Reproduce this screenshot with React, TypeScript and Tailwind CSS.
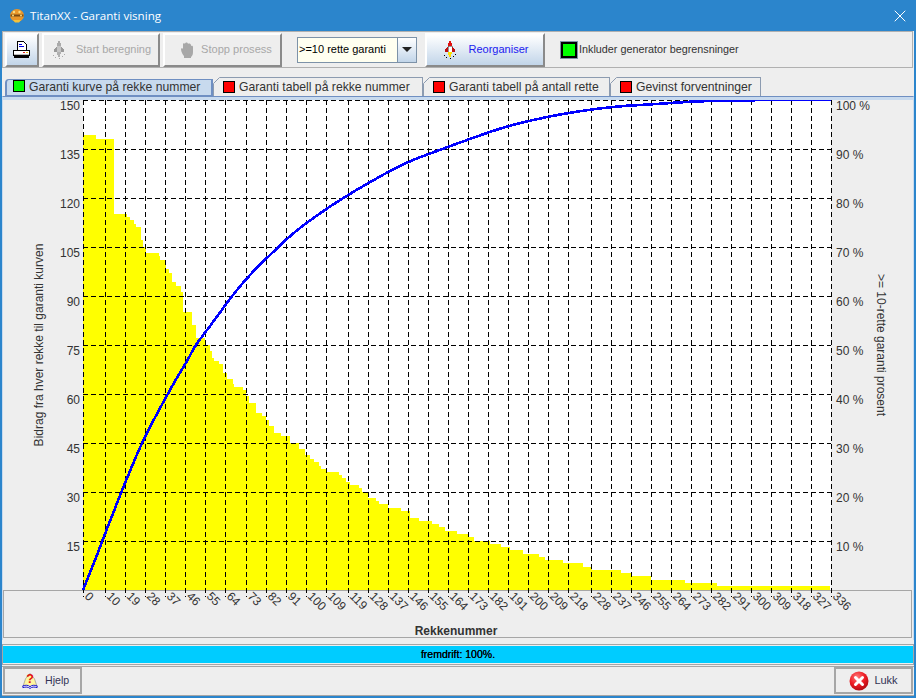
import { X } from "lucide-react";

const X_TICKS = [0, 10, 19, 28, 37, 46, 55, 64, 73, 82, 91, 100, 109, 119, 128, 137, 146, 155, 164, 173, 182, 191, 200, 209, 218, 228, 237, 246, 255, 264, 273, 282, 291, 300, 309, 318, 327, 336];
const LEFT_TICKS = [150, 135, 120, 105, 90, 75, 60, 45, 30, 15];
const RIGHT_TICKS = [100, 90, 80, 70, 60, 50, 40, 30, 20, 10];

// [x, top of bar] read off the reference
const BARS: [number, number][] = [
  [83, 135], [96, 139], [114, 214], [127, 217], [130, 220], [134, 224], [136, 227], [141, 240], [143, 247], [146, 253], [159, 256], [160, 260], [166, 269], [169, 273], [172, 282], [176, 286], [181, 292],
  [183, 312], [192, 325], [196, 338], [205, 345], [210, 351], [212, 358], [214, 361], [219, 364], [223, 373], [227, 379], [233, 384], [234, 387], [243, 390], [246, 396], [249, 403], [256, 413], [262, 416], [266, 420], [269, 426], [274, 433], [281, 436], [290, 443], [299, 449], [305, 455], [310, 459], [314, 462], [319, 466], [321, 469], [326, 472], [339, 475], [342, 478], [346, 482], [350, 485], [359, 488], [362, 492], [368, 498], [376, 501], [379, 504], [388, 508], [401, 511],
  [410, 518], [419, 521], [432, 524], [439, 527], [445, 531], [457, 534], [468, 537], [474, 541], [490, 544], [501, 547], [510, 550], [523, 554], [539, 557], [545, 560], [563, 563], [583, 567], [592, 570], [621, 573], [631, 576], [651, 580], [685, 583], [717, 586],
];

const CURVE: [number, number][] = [
  [83, 590], [95, 560], [105, 534], [125, 483], [145, 437], [170, 390], [187, 361], [196, 345], [213, 322], [233, 295], [250, 275], [270, 255], [300, 228], [345, 197], [400, 166], [445, 148], [496, 130], [529, 121], [569, 113], [613, 107], [656, 104], [696, 101.5], [739, 100.5], [773, 100], [831, 100],
];

const barPath = () => {
  let d = "M83 590";
  BARS.forEach(([x, y], i) => {
    const next = i + 1 < BARS.length ? BARS[i + 1][0] : 830;
    d += ` L${x} ${y} L${next} ${y}`;
  });
  return d + " L830 590 Z";
};

// catmull-rom through the read-off points, so the line has no visible corners
const curvePoints = () => {
  const out: string[] = [];
  for (let i = 0; i < CURVE.length - 1; i++) {
    const p0 = CURVE[Math.max(i - 1, 0)];
    const p1 = CURVE[i];
    const p2 = CURVE[i + 1];
    const p3 = CURVE[Math.min(i + 2, CURVE.length - 1)];
    for (let s = 0; s < 8; s++) {
      const t = s / 8;
      const y = 0.5 * (2 * p1[1] + (p2[1] - p0[1]) * t + (2 * p0[1] - 5 * p1[1] + 4 * p2[1] - p3[1]) * t * t + (3 * p1[1] - p0[1] - 3 * p2[1] + p3[1]) * t * t * t);
      const x = 0.5 * (2 * p1[0] + (p2[0] - p0[0]) * t + (2 * p0[0] - 5 * p1[0] + 4 * p2[0] - p3[0]) * t * t + (3 * p1[0] - p0[0] - 3 * p2[0] + p3[0]) * t * t * t);
      out.push(`${x.toFixed(1)},${Math.max(y, 100).toFixed(1)}`);
    }
  }
  out.push("831,100");
  return out.join(" ");
};

const tickX = (v: number) => Math.round(83 + (v * 748) / 336);

function AppIcon() {
  return (
    <svg width="16" height="16" viewBox="0 0 16 16">
      <ellipse cx="8" cy="7.5" rx="7" ry="6.5" fill="#e8962a" />
      <path d="M1.5 6.5h13v2h-13z" fill="#7a4a12" />
      <circle cx="5" cy="4" r="1.2" fill="#f8dc80" />
      <circle cx="10.5" cy="4" r="1.2" fill="#f8dc80" />
      <path d="M4 12h8l-2 2.5H6z" fill="#f4c23a" />
      <circle cx="4" cy="7.5" r="1" fill="#f8dc80" />
      <circle cx="12" cy="7.5" r="1" fill="#f8dc80" />
    </svg>
  );
}

function PrinterIcon() {
  return (
    <svg width="18" height="18" viewBox="0 0 18 18" shapeRendering="crispEdges">
      <path d="M4.5 .5h6l3 3v6h-9z" fill="#fff" stroke="#000" />
      <path d="M6 3h3v1H6zM6 5h5v1H6z" fill="#0000e0" />
      <path d="M.5 9.5h16v5h-16z" fill="#fff" stroke="#000" />
      <path d="M1 13h15v1H1z" fill="#bbb" />
      <path d="M1 15h15v2H1z" fill="#000" />
      <path d="M10 11h2v1h-2z" fill="#e02020" />
      <path d="M13 11h2v1h-2z" fill="#e8c020" />
    </svg>
  );
}

function RocketIcon({ muted }: { muted?: boolean }) {
  return (
    <svg width="16" height="18" viewBox="0 0 16 18" shapeRendering="crispEdges">
      <path d="M7 0h2v2h1v3H6V2h1z" fill={muted ? "#aaa" : "#e01010"} />
      <path d="M6 5h4v6H6z" fill={muted ? "#c4c4c4" : "#fff"} stroke={muted ? "none" : "#333"} strokeWidth=".5" />
      <path d="M5 6h1v5H3V9zM10 6h1l2 3v2h-3z" fill={muted ? "#999" : "#c01010"} />
      <path d="M6 11h4l-1 5H7z" fill={muted ? "#b0b0b0" : "#ffe000"} />
      <path d="M2 14h1v1H2zM13 13h1v1h-1zM4 16h1v1H4zM11 15h1v1h-1zM8 17h1v1H8z" fill={muted ? "#aaa" : "#000"} />
    </svg>
  );
}

function HandIcon() {
  return (
    <svg width="14" height="18" viewBox="0 0 14 18">
      <path d="M3 3c0-1 2-1 2 0 0-2 3-2 3 0 1-1 3 0 3 1v1c1-.5 2 0 2 1v5c0 3-1 4-2 5v1H4v-2C3 14 1 11 1 8c0-1 2-1 2 0z" fill="#a8a8a8" />
    </svg>
  );
}

function HelpIcon() {
  return (
    <svg width="16" height="19" viewBox="0 0 18 20">
      <path d="M1 17L4 8l5-6 5 6 3 9z" fill="#fff6a0" stroke="#777" strokeWidth=".6" />
      <path d="M1 16c3-1 6-1 8 1 2-2 5-2 8-1v2c-3-1-6-1-8 1-2-2-5-2-8-1z" fill="#fff" stroke="#0000d0" />
      <text x="9" y="13" textAnchor="middle" fontSize="14" fontWeight="700" fill="#e01010" fontFamily="Liberation Sans">?</text>
    </svg>
  );
}

function CloseIcon() {
  return (
    <svg width="20" height="20" viewBox="0 0 20 20">
      <defs>
        <radialGradient id="redball" cx="40%" cy="30%" r="75%">
          <stop offset="0%" stopColor="#ff7a7a" />
          <stop offset="55%" stopColor="#ee1c24" />
          <stop offset="100%" stopColor="#a80a10" />
        </radialGradient>
      </defs>
      <circle cx="10" cy="10" r="9.5" fill="url(#redball)" />
      <path d="M6.5 6.5l7 7M13.5 6.5l-7 7" stroke="#fff" strokeWidth="3" strokeLinecap="round" />
    </svg>
  );
}

function Swatch({ color }: { color: string }) {
  return <span className={`block w-[12px] h-[12px] border border-black shrink-0 ${color}`} />;
}

function Tab({ label, width, active }: { label: string; width: string; active?: boolean }) {
  if (active) {
    return (
      <div className={`${width} relative z-10 h-[18px] -mb-px flex items-start pl-[6px] gap-[4px] bg-[#c8daee] border-x-2 border-b-2 border-t border-[#6f8fc2] rounded-tl-[4px] text-[12.2px] leading-[14px] text-[#333333] shrink-0`}>
        <Swatch color="bg-[#00ff00]" />
        <span>{label}</span>
      </div>
    );
  }
  return (
    <div className={`${width} relative h-[19px] flex items-center pl-[9px] gap-[4px] bg-[#eeeeee] border border-b-0 border-[#8c9bb0] text-[12.2px] text-[#333333] shrink-0`}>
      <svg width="7" height="7" viewBox="0 0 7 7" className="absolute -left-px -top-px">
        <path d="M0 0h7L0 7z" fill="#eeeeee" />
        <path d="M6.5 .5L.5 6.5" stroke="#8c9bb0" fill="none" />
      </svg>
      <Swatch color="bg-[#ff0000]" />
      <span>{label}</span>
    </div>
  );
}

function Chart() {
  return (
    <svg width="910" height="540" viewBox="3 100 910 540" className="block" fontFamily="Liberation Sans" fill="#333333">
      <rect x="83" y="100" width="748" height="490" fill="#ffffff" />
      <path d={barPath()} fill="#ffff00" shapeRendering="crispEdges" />
      <rect x="3.5" y="590.5" width="908" height="47" fill="#eeeeee" stroke="#a6a6a6" />
      {LEFT_TICKS.map((v, i) => {
        const y = 100 + i * 49;
        return (
          <g key={v}>
            <line x1="83" x2="831" y1={y + 0.5} y2={y + 0.5} stroke="#000" strokeDasharray="5 3" />
            <text x="80" y={y + 10} textAnchor="end" fontSize="12">{v}</text>
          </g>
        );
      })}
      {RIGHT_TICKS.map((v, i) => (
        <text key={v} x="836" y={110 + i * 49} fontSize="12">{v} %</text>
      ))}
      {X_TICKS.map((v) => {
        const x = tickX(v);
        return (
          <g key={v}>
            <line x1={x + 0.5} x2={x + 0.5} y1="100" y2="597" stroke="#000" strokeDasharray="5 3" />
            <text transform={`translate(${x + 1} 597) rotate(45)`} fontSize="12">{v}</text>
          </g>
        );
      })}
      <polyline points={curvePoints()} fill="none" stroke="#0000ff" strokeWidth="2.6" shapeRendering="crispEdges" />
      <text x="456" y="635" textAnchor="middle" fontSize="12" fontWeight="700">Rekkenummer</text>
      <text transform="translate(43 345) rotate(-90)" textAnchor="middle" fontSize="12">Bidrag fra hver rekke til garanti kurven</text>
      <text transform="translate(877 345) rotate(90)" textAnchor="middle" fontSize="12">&gt;= 10-rette garanti prosent</text>
    </svg>
  );
}

export default function App() {
  const raised = "h-[34px] flex items-center border-2 border-t-white border-l-white border-b-[#8a8a8a] border-r-[#8a8a8a] text-[11px] shrink-0";
  const glossy = "bg-gradient-to-b from-white to-[#c2d5e9]";

  return (
    <div className="w-[916px] h-[698px] flex flex-col bg-[#eeeeee] font-['Liberation_Sans',sans-serif] overflow-hidden">
      {/* Title bar */}
      <div className="h-[31px] shrink-0 bg-[#2b85cc] flex items-center pl-[9px] pr-[6px] gap-[5px]">
        <AppIcon />
        <span className="text-[11.6px] text-white font-['Open_Sans',sans-serif] flex-1">TitanXX - Garanti visning</span>
        <X className="w-[20px] h-[20px] text-white" strokeWidth={1.2} />
      </div>

      <div className="flex-1 flex flex-col min-h-0 border-x-2 border-b-2 border-[#2b85cc]">
        {/* Toolbar */}
        <div className="h-[37px] shrink-0 border border-[#b0b0b0] mr-px flex items-center pl-[2px] bg-[#eeeeee]">
          <div className={`${raised} ${glossy} w-[34px] justify-center`}>
            <PrinterIcon />
          </div>
          <div className={`${raised} w-[118px] ml-[3px] justify-center gap-[9px] text-[#a8a8a8] bg-[#eeeeee]`}>
            <RocketIcon muted />
            <span>Start beregning</span>
          </div>
          <div className={`${raised} w-[119px] ml-[3px] pl-[15px] gap-[7px] text-[#a8a8a8] bg-[#eeeeee]`}>
            <HandIcon />
            <span className="text-[11.1px]">Stopp prosess</span>
          </div>
          <div className="ml-[15px] h-[26px] w-[120px] flex border border-[#7d92a8] shrink-0">
            <div className="flex-1 bg-[#fffff0] flex items-center pl-[1px] text-[11px] text-black">&gt;=10 rette garanti</div>
            <div className="w-[19px] border-l border-[#7d92a8] bg-gradient-to-b from-white to-[#c2d5e9] flex items-center justify-center">
              <span className="block w-0 h-0 border-x-[5px] border-x-transparent border-t-[5px] border-t-[#222222]" />
            </div>
          </div>
          <div className={`${raised} ${glossy} w-[120px] ml-[8px] justify-center gap-[11px] text-[#2020f0]`}>
            <RocketIcon />
            <span>Reorganiser</span>
          </div>
          <span className="ml-[16px] block w-[16px] h-[16px] bg-[#00ff00] border-2 border-black outline outline-1 outline-[#7d92a8] shrink-0" />
          <span className="ml-[2px] text-[10.8px] text-[#333333]">Inkluder generator begrensninger</span>
        </div>

        {/* Tabs */}
        <div className="h-[28px] shrink-0 flex items-end pl-[3px]">
          <Tab label="Garanti kurve på rekke nummer" width="w-[208px]" active />
          <Tab label="Garanti tabell på rekke nummer" width="w-[210px]" />
          <Tab label="Garanti tabell på antall rette" width="w-[187px]" />
          <Tab label="Gevinst forventninger" width="w-[151px]" />
        </div>

        {/* Chart */}
        <div className="h-[544px] shrink-0 border-t border-[#6f8fc2] border-x border-x-[#c8daee] bg-[#eeeeee] overflow-hidden">
          <div className="h-[3px] bg-[#c8daee]" />
          <Chart />
        </div>

        {/* Progress */}
        <div className="h-[21px] mt-[4px] shrink-0 border border-[#a6a6a6] py-px">
          <div className="h-full bg-[#00ccff] flex items-center justify-center text-[10.5px] font-medium text-black [text-shadow:0_0_0_#000]">fremdrift: 100%.</div>
        </div>

        {/* Footer */}
        <div className="flex-1 min-h-0 mt-[1px] border-y border-[#a6a6a6] flex items-start justify-between pl-[1px] pr-[1px]">
          <div className="w-[79px] h-[27px] border-2 border-[#a6a6a6] flex items-center pl-[17px] gap-[7px] text-[10.6px] text-[#333355]">
            <HelpIcon />
            <span>Hjelp</span>
          </div>
          <div className="w-[79px] h-[27px] border-2 border-[#a6a6a6] flex items-center justify-center gap-[5px] text-[11px] text-[#333355]">
            <CloseIcon />
            <span>Lukk</span>
          </div>
        </div>
      </div>
    </div>
  );
}
